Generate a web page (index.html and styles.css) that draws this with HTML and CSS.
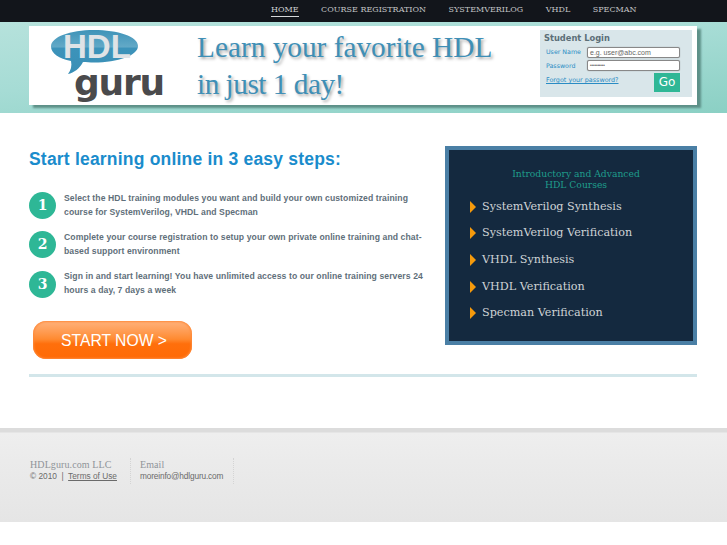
FILE: index.html
```html
<!DOCTYPE html>
<html lang="en">
<head>
<meta charset="utf-8">
<title>HDLguru</title>
<link rel="stylesheet" href="styles.css">
</head>
<body>
<nav class="topbar">
  <a class="nav-link active" href="#">HOME</a>
  <a class="nav-link" href="#">COURSE REGISTRATION</a>
  <a class="nav-link" href="#">SYSTEMVERILOG</a>
  <a class="nav-link" href="#">VHDL</a>
  <a class="nav-link" href="#">SPECMAN</a>
</nav>
<header class="header">
  <div class="banner">
    <div class="logo">
      <svg class="bubble" width="90" height="48" viewBox="0 0 90 48" aria-hidden="true">
        <defs>
          <linearGradient id="bub" x1="0" y1="0" x2="0" y2="1">
            <stop offset="0" stop-color="#3f93b8"/>
            <stop offset="0.38" stop-color="#62a9c7"/>
            <stop offset="0.42" stop-color="#3c93ba"/>
            <stop offset="1" stop-color="#3a8fb6"/>
          </linearGradient>
        </defs>
        <path d="M44 1C20 1 1 8 1 17.500c0 7 8 12 20 14.500 1 5 0 9-3 13 6-1 12-6 15-12 3 .2 7 .5 11 .5 24 0 44-7 44-16.500S68 1 44 1Z" fill="url(#bub)"/>
      </svg>
      <span class="logo-hdl">HDL</span>
      <span class="logo-guru">guru</span>
    </div>
    <div class="tagline">
      <p class="tag-line">Learn your favorite HDL</p>
      <p class="tag-line tag-second">in just 1 day!</p>
    </div>
    <form class="login">
      <h2 class="login-title">Student Login</h2>
      <div class="login-row">
        <label class="login-label">User Name</label>
        <span class="login-input">e.g. user@abc.com</span>
      </div>
      <div class="login-row">
        <label class="login-label">Password</label>
        <span class="login-input login-pass">••••••••••</span>
      </div>
      <div class="login-foot">
        <a class="forgot" href="#">Forgot your password?</a>
        <span class="go">Go</span>
      </div>
    </form>
  </div>
</header>
<main class="main">
  <div class="columns">
    <section class="steps">
      <h1 class="steps-title">Start learning online in 3 easy steps:</h1>
      <div class="step">
        <span class="step-num">1</span>
        <p class="step-text">Select the HDL training modules you want and build your own customized training course for SystemVerilog, VHDL and Specman</p>
      </div>
      <div class="step">
        <span class="step-num">2</span>
        <p class="step-text">Complete your course registration to setup your own private online training and chat-based support environment</p>
      </div>
      <div class="step">
        <span class="step-num">3</span>
        <p class="step-text">Sign in and start learning! You have unlimited access to our online training servers 24 hours a day, 7 days a week</p>
      </div>
      <a class="start" href="#">START NOW &gt;</a>
    </section>
    <aside class="courses">
      <h2 class="courses-title">Introductory and Advanced<br>HDL Courses</h2>
      <ul class="course-list">
        <li class="course">SystemVerilog Synthesis</li>
        <li class="course">SystemVerilog Verification</li>
        <li class="course">VHDL Synthesis</li>
        <li class="course">VHDL Verification</li>
        <li class="course">Specman Verification</li>
      </ul>
    </aside>
  </div>
  <div class="rule"></div>
</main>
<footer class="footer">
  <div class="foot-col foot-first">
    <div class="foot-head">HDLguru.com LLC</div>
    <div class="foot-text">© 2010 &nbsp;|&nbsp; <a class="foot-link" href="#">Terms of Use</a></div>
  </div>
  <div class="foot-col">
    <div class="foot-head">Email</div>
    <div class="foot-text foot-mail">moreinfo@hdlguru.com</div>
  </div>
</footer>
</body>
</html>
```

FILE: styles.css
```css
* { box-sizing: border-box; }
html, body { margin: 0; padding: 0; background: #fff; }
body { font-family: "Liberation Sans", Arial, sans-serif; height: 545px; overflow: hidden; }
p, h1, h2, ul { margin: 0; padding: 0; }

.topbar { height: 22px; background: #12151b; display: flex; align-items: center; gap: 22.500px; padding: 0 0 3px 271px; }
.nav-link { font: 8px/12px "DejaVu Serif", serif; color: #c2c4c6; text-decoration: none; white-space: nowrap; }
.nav-link.active { color: #d0d2d4; border-bottom: 1px solid #d5d7d9; padding-top: 1px; }

.header { height: 91px; padding: 4px 30px 0 29px; background: linear-gradient(175deg, #b6e2dc 0, #a6dcd5 45%, #8bd0c4 100%); }
.banner { width: 668px; height: 79px; background: #fff; box-shadow: 4px 3px 2px #5d9088; display: flex; position: relative; }

.logo { width: 140px; height: 79px; position: relative; flex: none; }
.bubble { position: absolute; left: 21px; top: 3px; }
.logo-hdl { position: absolute; left: 34px; top: 8px; font: bold 33px/26px "Liberation Sans", sans-serif; color: #dfe3e6; }
.logo-guru { position: absolute; left: 45px; top: 42px; font: bold 36px/30px "DejaVu Sans", sans-serif; color: #4a4a4c; letter-spacing: -1.200px; }

.tagline { width: 342px; flex: none; padding: 3px 0 0 28px; }
.tag-line { font: 29.300px/37px "Liberation Serif", serif; color: #3f8fb6; text-shadow: 2px 2px 3px #aaa; white-space: nowrap; }
.tag-second { letter-spacing: -.5px; }

.login { position: absolute; left: 511px; top: 4px; width: 152px; height: 67px; background: #d9e6ea; padding: 2px 4px 0 4px; }
.login-title { font: bold 8.300px/12px "DejaVu Sans", sans-serif; color: #5c6f78; margin-bottom: 2px; }
.login-row { display: flex; align-items: center; height: 12.500px; padding-left: 2px; margin-top: 1px; }
.login-label { width: 41px; font: 6.300px/10px "DejaVu Sans", sans-serif; color: #2a8cc4; flex: none; }
.login-input { width: 93px; height: 11px; border: 1px solid #888; border-radius: 2px; box-shadow: 0 0 1px #888; background: #fff; font: 7px/9px "Liberation Sans", sans-serif; color: #666; padding-left: 2px; white-space: nowrap; overflow: hidden; }
.login-pass { font-size: 4.500px; letter-spacing: -.1px; }
.login-foot { position: relative; padding: 3px 0 0 2px; }
.forgot { font: 6.400px/10px "DejaVu Sans", sans-serif; color: #2a8cc4; text-decoration: underline; display: block; }
.go { position: absolute; left: 110px; top: 1px; width: 26px; height: 19px; background: #2fb796; color: #fff; font: 12px/19px "DejaVu Sans", sans-serif; text-align: center; }

.main { padding: 33px 30px 0 29px; height: 315px; }
.columns { display: flex; justify-content: space-between; height: 228px; }
.steps { width: 400px; }
.steps-title { font: bold 17.500px/24px "Liberation Sans", sans-serif; color: #1a8ccc; white-space: nowrap; letter-spacing: .2px; margin-bottom: 21px; padding-top: 1px; }
.step { display: flex; align-items: center; gap: 8px; height: 27px; margin-bottom: 12.300px; width: 400px; }
.step-num { flex: none; width: 27px; height: 27px; border-radius: 50%; background: #2eb796; color: #fff; font: bold 14px/27px "DejaVu Serif", serif; text-align: center; }
.step-text { font: bold 8.650px/14px "Liberation Sans", sans-serif; letter-spacing: .08px; color: #5f6f7a; width: 365px; padding-bottom: 2px; }
.start { display: block; margin: 23px 0 0 4px; padding-left: 3px; width: 159px; height: 38px; border-radius: 13px; background: linear-gradient(#ffb27c 0, #ff9a4f 30%, #ff8a30 48%, #ff6f0c 60%, #ff6a05 100%); box-shadow: inset 0 0 2px 1px #ff8a3a; color: #fff; font: 15.700px/39px "Liberation Sans", sans-serif; text-align: center; text-decoration: none; }

.courses { width: 252px; height: 199px; background: #14293f; border: 4px solid #4a7fa5; padding: 18px 0 0 10px; }
.courses-title { font: 400 9.200px/11px "DejaVu Serif", serif; color: #1f9d8c; text-align: center; }
.course-list { list-style: none; padding: 3.500px 0 0 11px; }
.course { display: flex; align-items: center; gap: 6px; height: 26.600px; font: 11.200px/18px "DejaVu Serif", serif; color: #cfd3d6; }
.course::before { content: ""; width: 0; height: 0; border-left: 6px solid #f59a0c; border-top: 6px solid transparent; border-bottom: 6px solid transparent; }

.rule { height: 3px; background: #d3e6ea; }

.footer { height: 94px; background: linear-gradient(#dcdcdc 0, #dcdcdc 4px, #eeeeee 5px, #ebebeb 35%, #e5e5e5 100%); display: flex; padding: 30px 0 0 30px; }
.foot-col { height: 26px; padding: 0 10px 0 0; margin-right: 9px; border-right: 1px dotted #d4d4d4; }
.foot-first { padding-right: 13px; }
.foot-head { font: 10px/13px "Liberation Serif", serif; color: #8f9499; letter-spacing: .1px; }
.foot-text { font: 8.300px/11px "Liberation Sans", sans-serif; color: #6a6a6a; white-space: nowrap; }
.foot-mail { letter-spacing: -.15px; }
.foot-link { color: #6a6a6a; text-decoration: underline; }
```
